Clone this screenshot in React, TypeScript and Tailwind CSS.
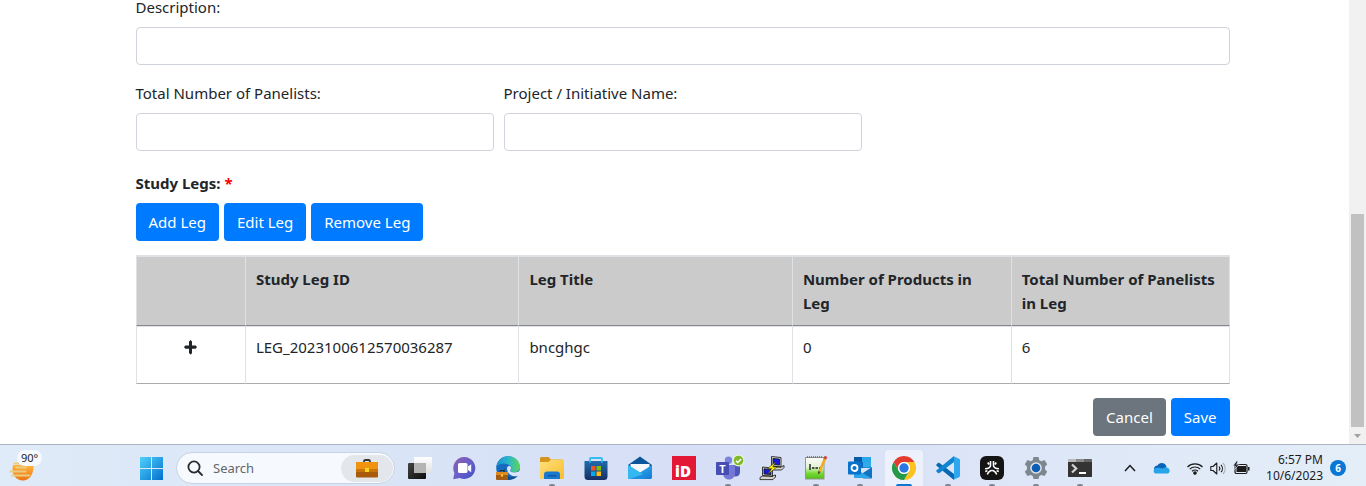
import type { ComponentPropsWithoutRef, ReactNode } from "react";

/* ---------- Form parts ---------- */

function Field({ id, label }: { id: string; label: string }) {
  return (
    <div className="flex flex-col gap-2">
      <label htmlFor={id} className="leading-6">
        {label}
      </label>
      <input
        id={id}
        type="text"
        className="h-[38px] w-full rounded border border-[#ced4da] bg-white px-3"
      />
    </div>
  );
}

function Button({
  tone = "primary",
  ...rest
}: { tone?: "primary" | "secondary" } & ComponentPropsWithoutRef<"button">) {
  return (
    <button
      type="button"
      className={
        tone === "primary"
          ? "h-[38px] rounded bg-[#007bff] px-[13px] whitespace-nowrap text-white"
          : "h-[38px] rounded bg-[#6c757d] px-[13px] whitespace-nowrap text-white"
      }
      {...rest}
    />
  );
}

const columns = [
  { title: "", width: "w-[10%]" },
  { title: "Study Leg ID", width: "w-1/4" },
  { title: "Leg Title", width: "w-1/4" },
  { title: "Number of Products in Leg", width: "w-1/5" },
  { title: "Total Number of Panelists in Leg", width: "w-1/5" },
];

const legs = [{ id: "LEG_2023100612570036287", title: "bncghgc", products: 0, panelists: 6 }];

function LegTable() {
  const cell =
    "border-t border-b border-l border-t-[#dee2e6] border-b-[#a9abad] border-l-[#dee2e6] px-2.5 pt-2 pb-6 align-top last:border-r last:border-r-[#dee2e6]";
  return (
    <table className="mt-3.5 w-full table-fixed border-separate border-spacing-0 leading-6">
      <thead>
        <tr>
          {columns.map((c) => (
            <th
              key={c.title}
              scope="col"
              className={
                c.width +
                " border-t-2 border-b border-l border-t-[#dee2e6] border-b-[#86888b] border-l-[#dee2e6] bg-[#cbcbcb] p-2.5 text-left align-top font-bold last:border-r last:border-r-[#dee2e6]"
              }
            >
              {c.title}
            </th>
          ))}
        </tr>
      </thead>
      <tbody>
        {legs.map((leg) => (
          <tr key={leg.id}>
            <td className={cell}>
              <button type="button" aria-label="Expand leg" className="mx-auto flex h-6 items-center">
                <svg width="13" height="15" viewBox="0 0 13 15" fill="#212529">
                  <path d="M5 1.5 6.5 0 8 1.5V5.5h3.6L13 7l-1.4 1.7H8V13l-1.2 1.8L5 13V8.7H1.3L0 7.1l1.3-1.6H5z" />
                </svg>
              </button>
            </td>
            <td className={cell}>{leg.id}</td>
            <td className={cell}>{leg.title}</td>
            <td className={cell}>{leg.products}</td>
            <td className={cell}>{leg.panelists}</td>
          </tr>
        ))}
      </tbody>
    </table>
  );
}

/* ---------- Taskbar icons, each on a 24 by 24 grid ---------- */

function Icon({ children }: { children: ReactNode }) {
  return (
    <svg width="24" height="24" viewBox="0 0 24 24" className="shrink-0 overflow-visible">
      {children}
    </svg>
  );
}

const WindowsIcon = (
  <Icon>
    <defs>
      <linearGradient id="win" x1="0" y1="0" x2="1" y2="1" gradientUnits="objectBoundingBox">
        <stop offset="0" stopColor="#50d0fb" />
        <stop offset="1" stopColor="#0470cf" />
      </linearGradient>
    </defs>
    <path fill="url(#win)" d="M1 1h11v11H1zM13 1h11v11H13zM1 13h11v11H1zM13 13h11v11H13z" />
  </Icon>
);

const TaskViewIcon = (
  <Icon>
    <defs>
      <linearGradient id="tvDark" x1="0" y1="0" x2="1" y2="1">
        <stop offset="0" stopColor="#444" />
        <stop offset="1" stopColor="#0c0c0c" />
      </linearGradient>
      <linearGradient id="tvLight" x1="0" y1="0" x2="0" y2="1">
        <stop offset="0" stopColor="#fff" />
        <stop offset="1" stopColor="#e0e0e0" />
      </linearGradient>
    </defs>
    <rect x="0" y="7" width="18" height="16" rx="1" fill="url(#tvDark)" />
    <rect x="6" y="1" width="18" height="16" rx="1" fill="url(#tvLight)" />
    <path fill="#b4b4b4" d="M6 7h12v10H6z" />
  </Icon>
);

const ChatIcon = (
  <Icon>
    <defs>
      <linearGradient id="chat" x1="0" y1="0" x2="1" y2="1">
        <stop offset="0" stopColor="#8f5fae" />
        <stop offset=".5" stopColor="#6a60c8" />
        <stop offset="1" stopColor="#3f50c8" />
      </linearGradient>
    </defs>
    <path fill="url(#chat)" d="M12.5 1a11 11 0 1 1-4.8 21L1.2 23.2 2.4 17A11.1 11.1 0 0 1 12.5 1z" />
    <rect x="6" y="7" width="9.5" height="10" rx="1.6" fill="#fff" />
    <path fill="#fff" d="m16 10.5 3.2-2.3v8L16 14z" />
  </Icon>
);

const EdgeIcon = (
  <Icon>
    <defs>
      <linearGradient id="edgeTop" x1="0" y1="0" x2="1" y2="0">
        <stop offset="0" stopColor="#1890d8" />
        <stop offset=".5" stopColor="#2ab8c8" />
        <stop offset="1" stopColor="#5fd45a" />
      </linearGradient>
    </defs>
    <circle cx="12" cy="12" r="11.8" fill="#176bbd" />
    <path fill="url(#edgeTop)" d="M.5 10.5C1.5 4.5 6 .2 12 .2c7 0 12 4.8 12 10.6 0 3.2-2.6 5.6-6 5.6-2.9 0-4.3-1-3.4-2.2.8-1.2.8-2.6 0-3.8C11.500 6.300 4 6.500.500 10.500z" />
    <path fill="#0e4f96" d="M9 12c-1 5 2 9 8 9 2.200 0 4.300-.700 5.500-1.900C19 24 14 24.500 10 23.500 6.500 21 6 15.500 9 12z" />
    <path fill="#dce4f7" d="M11 12.500c0-2 1.500-3 3-2.300 1.300.700 1.300 2.500.400 3.900-1 1.500 1 2.500 3.600 2.500 2.500 0 4.500-.700 6.500-2.500v4c-1 1-3.200 2.200-5.500 2.200-5 0-8-4.500-8-7.800z" />
    <path d="M4 16v-1.500h4V16" fill="none" stroke="#35281d" />
    <rect y="16" width="12" height="8" rx="1" fill="#a45c13" />
    <path fill="#df8a1d" d="M.5 16h11a.5.5 0 0 1 .5.5V19H0v-2.500a.5.5 0 0 1 .5-.5z" />
    <path fill="#ffd335" d="M5 18.500h2v2H5z" />
  </Icon>
);

const FolderIcon = (
  <Icon>
    <defs>
      <linearGradient id="folder" x1="0" y1="0" x2="1" y2="1">
        <stop offset="0" stopColor="#ffe07e" />
        <stop offset="1" stopColor="#f8bd2c" />
      </linearGradient>
    </defs>
    <path fill="#d8951c" d="M0 2.500C0 1.700.700 1 1.500 1h7L11 3.500h11.500V8H0z" />
    <path fill="url(#folder)" d="M0 6h8.500L11 3.500h11.500c.800 0 1.500.700 1.500 1.500v16.500c0 .800-.700 1.500-1.500 1.500h-21C.7 23 0 22.300 0 21.500z" />
    <path fill="#1979ce" d="M4 23v-4.500C4 16.500 5.200 15.500 7 15.500h10c1.800 0 3 1 3 3V23z" />
    <path fill="#0c59a5" d="M7.500 19h9v1.500h-9z" />
  </Icon>
);

const StoreIcon = (
  <Icon>
    <defs>
      <linearGradient id="store" x1="0" y1="0" x2="0" y2="1">
        <stop offset="0" stopColor="#216cb0" />
        <stop offset="1" stopColor="#172e63" />
      </linearGradient>
    </defs>
    <path fill="url(#store)" d="M.5 5h23v15.500A3.500 3.500 0 0 1 20 24H4A3.500 3.500 0 0 1 .5 20.500z" />
    <path fill="none" stroke="#35bdf2" strokeWidth="1.800" d="M6 6.500V2.800C6 2.200 6.400 2 7 2h10c.600 0 1 .200 1 .800V6.500" />
    <path fill="#f25325" d="M7 10h4.500v4.500H7z" />
    <path fill="#80bc08" d="M12.500 10H17v4.500h-4.500z" />
    <path fill="#08a8ef" d="M7 15.500h4.500V20H7z" />
    <path fill="#ffbb0b" d="M12.500 15.500H17V20h-4.500z" />
  </Icon>
);

const MailIcon = (
  <Icon>
    <defs>
      <linearGradient id="mail" x1="0" y1="0" x2="1" y2="1">
        <stop offset="0" stopColor="#36b9f3" />
        <stop offset="1" stopColor="#157bd3" />
      </linearGradient>
    </defs>
    <path fill="#0a5698" d="M0 9 12 .5 24 9v5H0z" />
    <path fill="#f4f7fb" d="M2.500 8h19v6L12 18l-9.500-4z" />
    <path fill="url(#mail)" d="m0 9 12 7.500L24 9v12.500c0 .800-.700 1.500-1.500 1.500h-21C.7 23 0 22.300 0 21.500z" />
    <path fill="#35b8f1" d="m0 9 15 9.200L1 23c-.600-.200-1-.800-1-1.500z" />
  </Icon>
);

const IdIcon = (
  <Icon>
    <path fill="#e31837" d="M0 0h24v24H0z" />
    <text x="11" y="21" textAnchor="middle" fontFamily="Open Sans, sans-serif" fontWeight="800" fontSize="15" fill="#fff">
      iD
    </text>
  </Icon>
);

const TeamsIcon = (
  <Icon>
    <circle cx="12.500" cy="4.200" r="3.700" fill="#7c83df" />
    <path fill="#4e56bb" d="M16 9h6.500c.800 0 1.500.700 1.500 1.500V16c0 3-2 4.500-4.500 4.500S16 19 16 16z" />
    <path fill="#7479d6" d="M8 9h9.500c.800 0 1.500.700 1.500 1.500V17c0 4-2.500 6.500-6 6.500S7 21 7 17z" />
    <rect y="6" width="13" height="13" rx="1" fill="#464eb3" />
    <text x="6.500" y="16.500" textAnchor="middle" fontFamily="Open Sans, sans-serif" fontWeight="700" fontSize="11" fill="#fff">
      T
    </text>
    <circle cx="22.500" cy="4.500" r="6" fill="#eaf3db" />
    <circle cx="22.500" cy="4.500" r="4.800" fill="#80b92c" />
    <path d="m20 4.700 1.800 1.800L25.200 3" fill="none" stroke="#fff" strokeWidth="1.500" />
  </Icon>
);

const PuttyIcon = (
  <Icon>
    <g stroke="#111" strokeWidth=".8">
      <path fill="#d4d4cc" d="m11.500.500 9.500 1v9.500l-9.500-1zM11 11h10l3-1.500v2L21.500 14H11z" />
      <path fill="#1717dd" d="m13 2.500 6.500.600v6L13 8.500z" />
      <path fill="#d4d4cc" d="m2.500 11 10 1v8.500l-10-1zM0 21.500 2.500 20h10l3-1v2L13 23.600H0z" />
      <path fill="#1717dd" d="m4 12.800 7 .600v5.200l-7-.600z" />
    </g>
    <path fill="#ffee18" stroke="#3c3a05" strokeWidth=".6" d="m15.500 6-8 6.500h4.200L8 18l9-7h-4.200z" />
  </Icon>
);

const NotepadIcon = (
  <Icon>
    <defs>
      <linearGradient id="note" x1="0" y1="0" x2="0" y2="1">
        <stop offset="0" stopColor="#fafafa" />
        <stop offset=".45" stopColor="#e4f3d5" />
        <stop offset=".75" stopColor="#72d82f" />
        <stop offset="1" stopColor="#55bd20" />
      </linearGradient>
    </defs>
    <rect x="1.500" y="1.500" width="18.500" height="21.500" fill="url(#note)" stroke="#90988a" />
    <path d="M3 1h16" stroke="#666" strokeWidth="1.600" strokeDasharray="1 1" />
    <path d="M6 8v6M8 12h2.500M11.500 12H14M15 12h1.500" stroke="#1c2418" strokeWidth="1.400" fill="none" />
    <path d="m21.500 1.500-6 14" stroke="#f0a928" strokeWidth="2.600" />
    <path d="M20.800 3 22 .3" stroke="#c84840" strokeWidth="3" />
    <path fill="#473a26" d="m14.200 15 2.400 1-2.600 2.500z" />
  </Icon>
);

const OutlookIcon = (
  <Icon>
    <path fill="#1490df" d="M7 1h15c.600 0 1 .400 1 1v10H6V2c0-.600.400-1 1-1z" />
    <path fill="#0a5ba5" d="M6 1h9v5H6z" />
    <path fill="#28a8ea" d="M14 1h8c.600 0 1 .400 1 1v4h-9z" />
    <path fill="#0e6abb" d="M9 6h6v6H9z" />
    <path fill="#34a9e9" d="M15 6h8v5h-8z" />
    <path fill="#1173c4" d="m24 11-9 6v5.500h8c.600 0 1-.400 1-1z" />
    <path fill="#29a5e8" d="m6 12 17 10H7c-.600 0-1-.400-1-1z" />
    <rect y="5.500" width="13" height="13" rx="1" fill="#0873c9" />
    <circle cx="6.500" cy="12" r="3" fill="none" stroke="#fff" strokeWidth="1.800" />
  </Icon>
);

const ChromeIcon = (
  <Icon>
    <path fill="#e33b2e" d="M1.600 6a12 12 0 0 1 20.800 0H12a6 6 0 0 0-5.200 9z" />
    <path fill="#fcc31e" d="M22.400 6A12 12 0 0 1 12 24l5.200-9A6 6 0 0 0 12 6z" />
    <path fill="#269947" d="M12 24A12 12 0 0 1 1.600 6l5.200 9a6 6 0 0 0 10.400 0z" />
    <circle cx="12" cy="12" r="6" fill="#fff" />
    <circle cx="12" cy="12" r="4.700" fill="#2b76e5" />
  </Icon>
);

const CodeIcon = (
  <Icon>
    <path fill="#0869b2" d="M.4 8.500 2 7c.400-.400 1-.400 1.500 0L18 18v6L.5 9.700c-.400-.300-.400-.900-.100-1.200z" />
    <path fill="#0f85d1" d="M.4 15.500 2 17c.400.400 1 .400 1.500 0L18 6V0L.5 14.300c-.400.300-.400.900-.100 1.200z" />
    <path fill="#2ca7f0" d="M17 0 23 2.700c.600.300 1 .800 1 1.500v15.600c0 .700-.400 1.200-1 1.500L17 24c-.800.300 1-.200 1-1V1c0-.800-1.800-1.300-1-1z" />
  </Icon>
);

const BurstIcon = (
  <Icon>
    <rect width="24" height="24" rx="6" fill="#141414" />
    <path
      d="M10.500 5v4.500c0 2-2 3-5.500 3.300M13.500 5v4.500c0 2 2 3 5.500 3.300M7.800 6.500l1.200 2M16.200 6.500l-1.200 2M7.300 18.500c1-2.500 2.700-4 4.700-4s3.700 1.500 4.700 4M5.200 15.500l2.200-.8M18.800 15.500l-2.200-.8"
      fill="none"
      stroke="#fff"
      strokeWidth="1.600"
    />
  </Icon>
);

const GearIcon = (
  <Icon>
    <path
      fill="#7d878f"
      d="M9.500 1h5l.8 3.200 2 1.100L20.500 4l2.700 4.200-2.200 2.600v2.400l2.200 2.600-2.700 4.200-3.200-1-2 1.100-.8 2.900h-5l-.8-2.900-2-1.100-3.200 1L.8 15.800 3 13.200v-2.400L.8 8.200 3.500 4l3.200 1.300 2-1.100z"
    />
    <circle cx="12" cy="12" r="5.800" fill="#dce5ee" />
    <circle cx="12" cy="12" r="4.300" fill="#0c5eb2" />
  </Icon>
);

const TerminalIcon = (
  <Icon>
    <path fill="#333" d="M0 6h24v14.500c0 .300-.300.500-.500.500H.5c-.200 0-.500-.200-.500-.500z" />
    <path fill="#b9b9b9" d="M.5 3H8v3H0V3.500C0 3.200.2 3 .5 3z" />
    <path fill="#8b8b8b" d="M8 3h8v3H8z" />
    <path fill="#666" d="M16 3h7.500c.300 0 .500.200.500.500V6h-8z" />
    <path d="m4 8.500 4.200 4L4 16.500" fill="none" stroke="#d5d5d5" strokeWidth="2.200" />
    <path fill="#fff" d="M11 16h7v2h-7z" />
  </Icon>
);

const apps: { name: string; icon: ReactNode; state?: "open" | "active" }[] = [
  { name: "Task view", icon: TaskViewIcon },
  { name: "Chat", icon: ChatIcon },
  { name: "Edge", icon: EdgeIcon },
  { name: "File Explorer", icon: FolderIcon, state: "open" },
  { name: "Store", icon: StoreIcon },
  { name: "Mail", icon: MailIcon },
  { name: "iD", icon: IdIcon },
  { name: "Teams", icon: TeamsIcon, state: "open" },
  { name: "PuTTY", icon: PuttyIcon },
  { name: "Notepad++", icon: NotepadIcon, state: "open" },
  { name: "Outlook", icon: OutlookIcon, state: "open" },
  { name: "Chrome", icon: ChromeIcon, state: "active" },
  { name: "Visual Studio Code", icon: CodeIcon, state: "open" },
  { name: "Burst", icon: BurstIcon, state: "open" },
  { name: "Settings", icon: GearIcon, state: "open" },
  { name: "Terminal", icon: TerminalIcon, state: "open" },
];

function Weather() {
  return (
    <button type="button" aria-label="Weather" className="relative h-full w-[129px] shrink-0 pl-2">
      <svg width="34" height="32" viewBox="0 0 34 32">
        <defs>
          <linearGradient id="sun" x1="0" y1="0" x2="0" y2="1">
            <stop offset="0" stopColor="#ffb63d" />
            <stop offset="1" stopColor="#ec7413" />
          </linearGradient>
        </defs>
        <path fill="url(#sun)" d="M5 13h20.500c.5 9-4 15.500-10.500 15.500S4 23 4.500 16z" />
        <path
          d="M6.500 11.500H14M8 15.500h10M2.500 19.500h15M4 23.500h17.500"
          stroke="#eccb83"
          strokeWidth="1.800"
          strokeLinecap="round"
        />
      </svg>
      <span className="absolute top-0 left-[17px] rounded-lg bg-[#f5f8fc] px-1 text-[11px] leading-4 text-[#1b1b1b]">
        90°
      </span>
    </button>
  );
}

function SearchBox() {
  return (
    <div className="ml-[3px] flex h-8 w-[219px] shrink-0 items-center rounded-full border border-[#c7d3e4] bg-[#f6f9fe] pr-px pl-2.5">
      <svg width="17" height="17" viewBox="0 0 17 17" fill="none" stroke="#2a2a2a" strokeWidth="1.800" className="shrink-0">
        <circle cx="7" cy="7" r="5.600" />
        <path d="m11 11 4 4" strokeLinecap="round" />
      </svg>
      <input
        aria-label="Search"
        placeholder="Search"
        className="ml-[9px] min-w-0 flex-1 bg-transparent text-[13px] leading-5 placeholder:text-[#636669]"
      />
      <span className="flex h-[27px] w-[52px] items-center justify-center rounded-full bg-[#e3e6eb]">
        <svg width="22" height="19" viewBox="0 0 22 19">
          <path d="M8 4V2.500C8 1.700 8.500 1 9.500 1h3c1 0 1.500.700 1.500 1.500V4" fill="none" stroke="#333" strokeWidth="1.800" />
          <rect y="3" width="22" height="15.500" rx="1" fill="#a85b0d" />
          <path fill="#f09410" d="M1 3h20c.600 0 1 .400 1 1v6H0V4c0-.600.400-1 1-1z" />
          <path fill="#c9730c" d="M0 10h22v3H0z" />
          <path fill="#ffd61f" d="M9 9h4v4H9z" />
        </svg>
      </span>
    </div>
  );
}

function Tray() {
  return (
    <div className="ml-auto flex items-center pr-5 text-[#1b1b1b]">
      <button type="button" aria-label="Hidden icons" className="mr-[17px]">
        <svg width="12" height="8" viewBox="0 0 12 8" fill="none" stroke="#1b1b1b" strokeWidth="1.500">
          <path d="m1 7 5-5.500L11 7" />
        </svg>
      </button>
      <svg width="17" height="12" viewBox="0 0 17 12" className="mr-[17px]">
        <path fill="#0a64b8" d="M1 7C1 4.500 3 3.500 4.500 3.500 5.500 1 9 0 11.500 1.800c1.200.900 1.800 2 2 3.200L8 9z" />
        <path fill="#28a4ea" d="M3 11.500C.5 11.500-.5 7.500 2.500 6.300c3-1.300 5 .2 7 .2S12 4.800 14 5.500c3.500 1 3.500 6 0 6z" />
      </svg>
      <button type="button" aria-label="Network, sound and battery" className="flex items-center gap-[7px]">
        <svg width="16" height="13" viewBox="0 0 16 13" fill="none" stroke="#1b1b1b" strokeWidth="1.200">
          <path d="M.5 5a10.500 10.500 0 0 1 15 0M2.800 7.200a7.300 7.300 0 0 1 10.400 0M5 9.300a4.300 4.300 0 0 1 6 0" />
          <circle cx="8" cy="11" r="1.200" fill="#1b1b1b" />
        </svg>
        <svg width="16" height="13" viewBox="0 0 16 13" fill="none" stroke="#1b1b1b" strokeWidth="1.100">
          <path d="M.8 4.500H3L6.800 1v11L3 8.500H.8z" strokeLinejoin="round" />
          <path d="M9 4.500a3 3 0 0 1 0 4M11 2.800a5.500 5.500 0 0 1 0 7.400" />
          <path d="M13 1a8 8 0 0 1 0 11" stroke="#a9b1ba" />
        </svg>
        <svg width="17" height="14" viewBox="0 0 17 14">
          <rect x="2" y="3.500" width="12" height="9" rx="1.500" fill="none" stroke="#1b1b1b" strokeWidth="1.200" />
          <path fill="#1b1b1b" d="M3.500 5h9.500v6H3.500zM15 6h1.500v3.500H15z" />
          <path fill="#1b1b1b" stroke="#e2ecf8" strokeWidth=".6" d="M3.500 0 0 5h2.500L1.500 8.500 6 3.800H3.600L5 0z" />
        </svg>
      </button>
      <button type="button" className="ml-4 text-right text-[12px] leading-4 whitespace-nowrap">
        6:57 PM
        <br />
        10/6/2023
      </button>
      <span className="ml-[7px] flex size-4 items-center justify-center rounded-full bg-[#0878d4] text-[10px] leading-4 font-bold text-white">
        6
      </span>
    </div>
  );
}

function Taskbar() {
  return (
    <footer className="flex h-[42px] shrink-0 border-t border-[#aab4c3] bg-linear-to-r from-[#dfebf8] via-[#d6dff6] to-[#e4eef8] pt-[5px]">
      <Weather />
      <button type="button" aria-label="Start" className="flex w-11 shrink-0 items-center justify-center">
        {WindowsIcon}
      </button>
      <div className="flex items-center">
        <SearchBox />
      </div>
      <nav aria-label="Apps" className="ml-[3px] flex">
        {apps.map((app) => (
          <button
            key={app.name}
            type="button"
            aria-label={app.name}
            className="relative flex w-11 justify-center"
          >
            <span
              className={
                app.state === "active"
                  ? "flex h-full w-[38px] items-center justify-center rounded-t bg-[#edf1fb]"
                  : "flex h-full w-[38px] items-center justify-center"
              }
            >
              {app.icon}
            </span>
            {app.state === "open" && (
              <span className="absolute bottom-0 left-[19px] h-[2px] w-1.5 rounded-t bg-[#7f8590]" />
            )}
            {app.state === "active" && (
              <span className="absolute bottom-0 left-3.5 h-[2px] w-4 rounded-t bg-[#0a78d4]" />
            )}
          </button>
        ))}
      </nav>
      <Tray />
    </footer>
  );
}

/* ---------- Page ---------- */

export default function App() {
  return (
    <div className="flex h-screen flex-col overflow-hidden bg-white font-['Noto_Sans','Open_Sans',sans-serif] text-[15px] text-[#212529]">
      <div className="flex min-h-0 flex-1">
        <main className="min-w-0 flex-1 overflow-hidden">
          <form className="mx-auto -mt-[5px] max-w-[1140px] pr-[15px] pl-[31px]">
            <Field id="description" label="Description:" />
            <div className="mt-4 grid grid-cols-3 gap-2.5">
              <Field id="panelists" label="Total Number of Panelists:" />
              <Field id="project" label="Project / Initiative Name:" />
            </div>
            <h2 className="mt-5 leading-6 font-bold">
              Study Legs: <span className="text-[#f00]">*</span>
            </h2>
            <div className="mt-2 flex gap-[5px]">
              <Button>Add Leg</Button>
              <Button>Edit Leg</Button>
              <Button>Remove Leg</Button>
            </div>
            <LegTable />
            <div className="mt-3.5 flex justify-end gap-[5px]">
              <Button tone="secondary">Cancel</Button>
              <Button>Save</Button>
            </div>
          </form>
        </main>
        <div className="flex w-[17px] shrink-0 flex-col items-center justify-end bg-[#f1f1f1]">
          <div className="h-[213px] w-[13px] bg-[#c1c1c1]" />
          <div className="flex h-[17px] items-center">
            <svg width="7" height="4" viewBox="0 0 7 4" fill="#a3a3a3">
              <path d="M0 0h7L3.500 4z" />
            </svg>
          </div>
        </div>
      </div>
      <Taskbar />
    </div>
  );
}
